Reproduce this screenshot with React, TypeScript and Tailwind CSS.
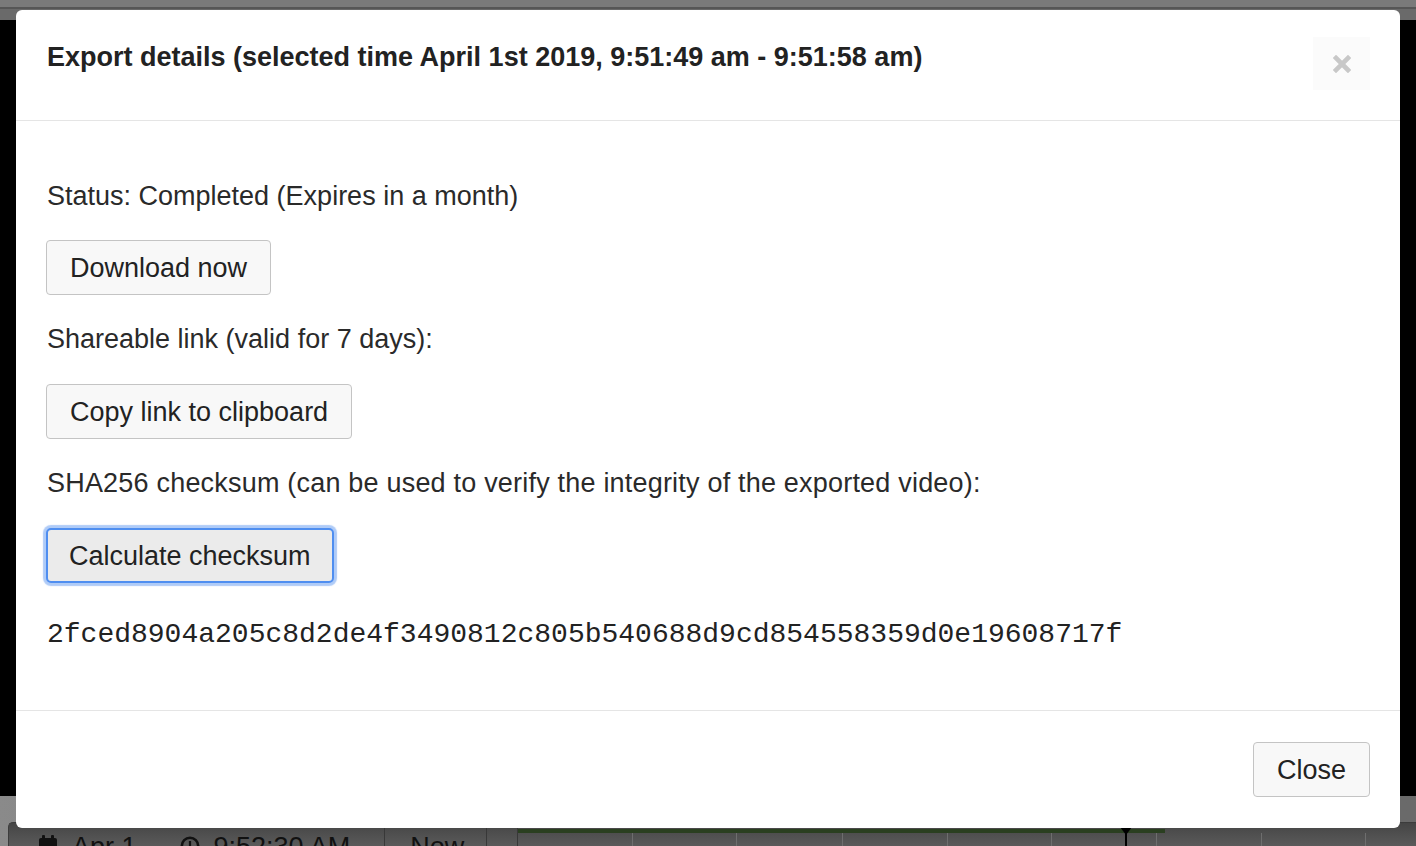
import React from "react";

const sans = "[font-family:'Liberation_Sans',Arial,Helvetica,sans-serif]";

function CalendarIcon() {
  return (
    <svg width="18" height="20" viewBox="0 0 18 20" className="shrink-0">
      <rect x="3" y="0" width="3" height="5" rx="1" fill="#111" />
      <rect x="12" y="0" width="3" height="5" rx="1" fill="#111" />
      <rect x="0" y="3" width="18" height="17" rx="2" fill="#111" />
    </svg>
  );
}

function ClockIcon() {
  return (
    <svg width="20" height="20" viewBox="0 0 20 20" className="shrink-0">
      <circle cx="10" cy="10" r="8.2" fill="none" stroke="#111" strokeWidth="2.6" />
      <path d="M10 5v5.5l3 2" fill="none" stroke="#111" strokeWidth="2.2" />
    </svg>
  );
}

function Timeline() {
  const lines = [114, 218, 324, 429, 533, 638, 743, 847];
  return (
    <svg width="898" height="24" viewBox="0 0 898 24" className="block">
      <rect x="0" y="6" width="647" height="4" fill="#2a3f20" />
      {lines.map((x) => (
        <rect key={x} x={x} y="10" width="1" height="14" fill="#6e6e6e" />
      ))}
      <path d="M602 4 L614 4 L608 12 Z" fill="#000" />
      <rect x="607" y="4" width="2" height="20" fill="#000" />
    </svg>
  );
}

function Btn({ children, focused = false }: { children: React.ReactNode; focused?: boolean }) {
  if (focused) {
    return (
      <button className="h-[55px] rounded-[5px] border-2 border-[#4f8ef0] bg-[#ebebeb] px-[21px] text-[27px] leading-[36px] text-[#222] shadow-[0_0_1px_3px_rgba(110,160,240,0.55)]">
        {children}
      </button>
    );
  }
  return (
    <button className="h-[55px] rounded-[4px] border border-[#c4c4c4] bg-[#f8f8f8] px-[23px] text-[27px] leading-[36px] text-[#222]">
      {children}
    </button>
  );
}

export default function App() {
  return (
    <div className={`relative h-[846px] w-[1416px] overflow-hidden bg-black ${sans}`}>
      {/* background application */}
      <div className="flex h-full flex-col">
        <div className="h-[20px] bg-[#6a6a6a]">
          <div className="h-[7px] bg-[#7a7a7a]" />
          <div className="h-[2px] bg-[#565656]" />
        </div>
        <div className="flex-1 bg-black" />
        <div className="h-[50px] bg-gradient-to-r from-[#8a8a8a] via-[#6a6a6a] to-[#6a6a6a] pl-[8px] pt-[26px]">
          <div className="flex h-full rounded-tl-[5px] border-l border-t border-[#3c3c3c] bg-gradient-to-b from-[#454545] to-[#5a5a5a]">
            <div className="flex w-[377px] items-start gap-[15px] border-r border-[#383838] pl-[30px] pt-[11px] text-[27px] leading-[27px] text-[#111]">
              <div className="mt-[1px]">
                <CalendarIcon />
              </div>
              <span>Apr 1</span>
              <div className="ml-[28px] mt-[2px]">
                <ClockIcon />
              </div>
              <span className="-ml-[1px]">9:52:30 AM</span>
            </div>
            <div className="w-[102px] border-r border-[#383838] pl-[25px] pt-[11px] text-[27px] leading-[27px] text-[#111]">
              Now
            </div>
            <div className="w-[31px] border-r border-[#383838]" />
            <div className="flex-1">
              <Timeline />
            </div>
          </div>
        </div>
      </div>

      {/* modal */}
      <div className="absolute left-[16px] top-[10px] flex h-[818px] w-[1384px] flex-col rounded-[6px] bg-white">
        <div className="flex h-[111px] items-start justify-between border-b border-[#e5e5e5] pl-[31px] pr-[30px] pt-[29px]">
          <h4 className="text-[27px] font-bold leading-[36px] text-[#222]">
            Export details (selected time April 1st 2019, 9:51:49 am - 9:51:58 am)
          </h4>
          <button className="-mt-[2px] flex h-[53px] w-[57px] items-center justify-center bg-[#fbfbfb]">
            <svg width="18" height="18" viewBox="0 0 18 18">
              <path d="M3 3 L15 15 M15 3 L3 15" stroke="#c8c8c8" strokeWidth="4.6" strokeLinecap="square" />
            </svg>
          </button>
        </div>

        <div className="flex flex-1 flex-col items-start px-[30px] pt-[57px] text-[27px] leading-[36px] text-[#2a2a2a]">
          <p className="pl-[1px]">Status: Completed (Expires in a month)</p>
          <div className="mt-[26px]">
            <Btn>Download now</Btn>
          </div>
          <p className="mt-[26px] pl-[1px]">Shareable link (valid for 7 days):</p>
          <div className="mt-[27px]">
            <Btn>Copy link to clipboard</Btn>
          </div>
          <p className="mt-[26px] pl-[1px] tracking-[0.2px]">SHA256 checksum (can be used to verify the integrity of the exported video):</p>
          <div className="mt-[27px]">
            <Btn focused>Calculate checksum</Btn>
          </div>
          <p className="mt-[34px] pl-[1px] [font-family:'Liberation_Mono','Courier_New',monospace] text-[28px] leading-[36px] text-[#222]">
            2fced8904a205c8d2de4f3490812c805b540688d9cd854558359d0e19608717f
          </p>
        </div>

        <div className="flex h-[118px] items-start justify-end border-t border-[#e5e5e5] pr-[30px] pt-[31px]">
          <Btn>Close</Btn>
        </div>
      </div>
    </div>
  );
}
